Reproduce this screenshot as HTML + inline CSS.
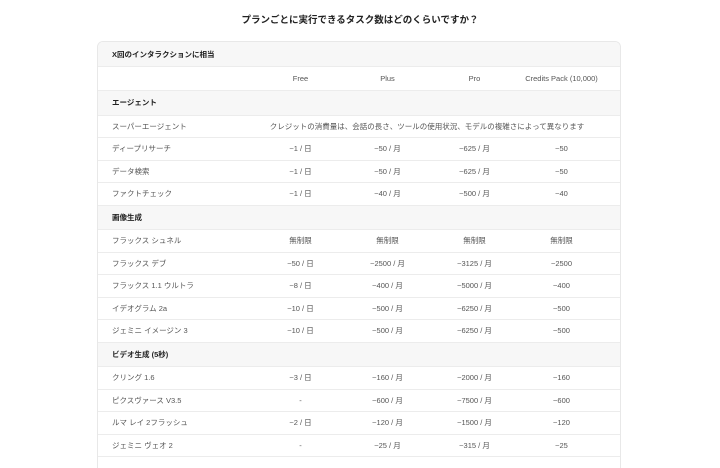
<!DOCTYPE html>
<html><head><meta charset="utf-8"><style>
html,body{margin:0;background:#fff;font-family:"Liberation Sans","Noto Sans CJK JP",sans-serif;width:720px;height:468px;overflow:hidden;position:relative}
h1{position:absolute;top:12px;left:0;width:720px;text-align:center;font-size:9.5px;font-weight:bold;color:#222;margin:0}
.card{position:absolute;left:97px;top:41px;width:522px;height:440px;border:1px solid #e8e8e8;border-radius:6px;overflow:hidden}
.r{display:flex;align-items:center;border-bottom:1px solid #ececec;box-sizing:border-box;height:22.5px;font-size:7.5px;color:#555}
.s{background:#f7f7f7;font-weight:bold;color:#222;height:24.5px}
.r div{text-align:center}
.r .l{width:155px;padding-left:14px;text-align:left;box-sizing:border-box}
.c{width:87px}
</style></head><body>
<h1>プランごとに実行できるタスク数はどのくらいですか？</h1>
<div class="card">
<div class="r s" style="height:25px"><div class="l">X回のインタラクションに相当</div></div>
<div class="r" style="height:24px"><div class="l"></div><div class="c" style="margin-left:4px">Free</div><div class="c">Plus</div><div class="c">Pro</div><div class="c">Credits Pack (10,000)</div></div>
<div class="r s"><div class="l">エージェント</div></div>
<div class="r"><div class="l">スーパーエージェント</div><div style="width:348px">クレジットの消費量は、会話の長さ、ツールの使用状況、モデルの複雑さによって異なります</div></div>
<div class="r"><div class="l">ディープリサーチ</div><div class="c" style="margin-left:4px">~1 / 日</div><div class="c">~50 / 月</div><div class="c">~625 / 月</div><div class="c">~50</div></div>
<div class="r"><div class="l">データ検索</div><div class="c" style="margin-left:4px">~1 / 日</div><div class="c">~50 / 月</div><div class="c">~625 / 月</div><div class="c">~50</div></div>
<div class="r"><div class="l">ファクトチェック</div><div class="c" style="margin-left:4px">~1 / 日</div><div class="c">~40 / 月</div><div class="c">~500 / 月</div><div class="c">~40</div></div>
<div class="r s"><div class="l">画像生成</div></div>
<div class="r"><div class="l">フラックス シュネル</div><div class="c" style="margin-left:4px">無制限</div><div class="c">無制限</div><div class="c">無制限</div><div class="c">無制限</div></div>
<div class="r"><div class="l">フラックス デブ</div><div class="c" style="margin-left:4px">~50 / 日</div><div class="c">~2500 / 月</div><div class="c">~3125 / 月</div><div class="c">~2500</div></div>
<div class="r"><div class="l">フラックス 1.1 ウルトラ</div><div class="c" style="margin-left:4px">~8 / 日</div><div class="c">~400 / 月</div><div class="c">~5000 / 月</div><div class="c">~400</div></div>
<div class="r"><div class="l">イデオグラム 2a</div><div class="c" style="margin-left:4px">~10 / 日</div><div class="c">~500 / 月</div><div class="c">~6250 / 月</div><div class="c">~500</div></div>
<div class="r"><div class="l">ジェミニ イメージン 3</div><div class="c" style="margin-left:4px">~10 / 日</div><div class="c">~500 / 月</div><div class="c">~6250 / 月</div><div class="c">~500</div></div>
<div class="r s"><div class="l">ビデオ生成 (5秒)</div></div>
<div class="r"><div class="l">クリング 1.6</div><div class="c" style="margin-left:4px">~3 / 日</div><div class="c">~160 / 月</div><div class="c">~2000 / 月</div><div class="c">~160</div></div>
<div class="r"><div class="l">ピクスヴァース V3.5</div><div class="c" style="margin-left:4px">-</div><div class="c">~600 / 月</div><div class="c">~7500 / 月</div><div class="c">~600</div></div>
<div class="r"><div class="l">ルマ レイ 2フラッシュ</div><div class="c" style="margin-left:4px">~2 / 日</div><div class="c">~120 / 月</div><div class="c">~1500 / 月</div><div class="c">~120</div></div>
<div class="r"><div class="l">ジェミニ ヴェオ 2</div><div class="c" style="margin-left:4px">-</div><div class="c">~25 / 月</div><div class="c">~315 / 月</div><div class="c">~25</div></div>
<div class="r"></div>
</div>
</body></html>
